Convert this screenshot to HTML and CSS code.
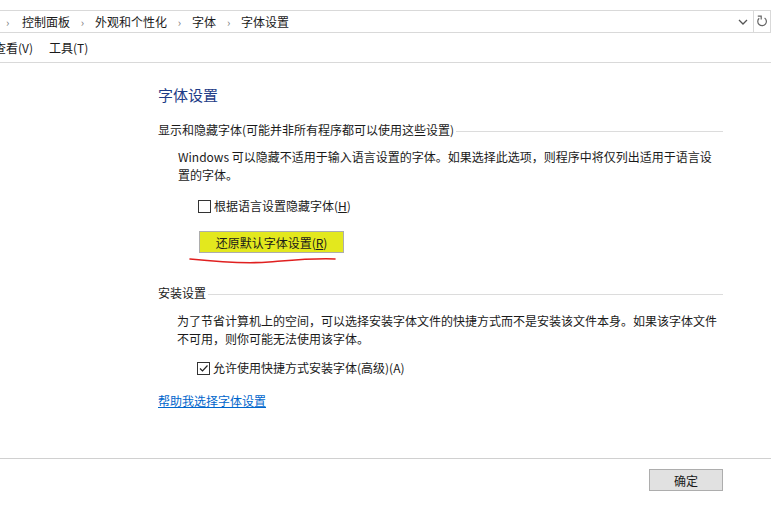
FILE: index.html
```html
<!DOCTYPE html>
<html lang="zh-CN">
<head>
    <meta charset="UTF-8">
    <title>字体设置</title>
    <link rel="stylesheet" href="styles.css">
</head>
<body>
    <div class="addr-bar">
        <div class="crumbs">
            <span class="sep">›</span>
            <span>控制面板</span>
            <span class="sep">›</span>
            <span>外观和个性化</span>
            <span class="sep">›</span>
            <span>字体</span>
            <span class="sep">›</span>
            <span>字体设置</span>
        </div>
        <div class="addr-tools">
            <svg class="drop" width="10" height="6" viewBox="0 0 10 6"><path d="M1 1 L5 5 L9 1" fill="none" stroke="#555" stroke-width="1.3"/></svg>
            <div class="refresh">
                <svg width="12" height="13" viewBox="0 0 12 13"><path d="M3.2 3.2 A4.3 4.3 0 1 0 8.6 2.9" fill="none" stroke="#666" stroke-width="1.2"/><path d="M1.8 1.2 L5.2 1.2 L5.2 4.6" fill="none" stroke="#666" stroke-width="1.2"/></svg>
            </div>
        </div>
    </div>

    <div class="menu-bar">
        <span class="menu-item cut">查看(V)</span>
        <span class="menu-item">工具(T)</span>
    </div>

    <div class="main">
        <h1 class="page-title">字体设置</h1>

        <div class="group-head"><span>显示和隐藏字体(可能并非所有程序都可以使用这些设置)</span><i></i></div>
        <p class="desc">Windows 可以隐藏不适用于输入语言设置的字体。如果选择此选项，则程序中将仅列出适用于语言设置的字体。</p>
        <label class="check-row"><span class="box"></span>根据语言设置隐藏字体(<u>H</u>)</label>
        <div class="btn-wrap">
            <button class="btn btn-marked">还原默认字体设置(<u>R</u>)</button>
            <svg class="scribble" width="150" height="10" viewBox="0 0 150 10"><path d="M1 4 C30 7 55 9 80 7 C105 5 125 3 146 4" fill="none" stroke="#e02020" stroke-width="1.6" stroke-linecap="round"/></svg>
        </div>

        <div class="group-head second"><span>安装设置</span><i></i></div>
        <p class="desc desc2">为了节省计算机上的空间，可以选择安装字体文件的快捷方式而不是安装该文件本身。如果该字体文件不可用，则你可能无法使用该字体。</p>
        <label class="check-row check2"><span class="box checked"><svg width="11" height="11" viewBox="0 0 11 11"><path d="M2 5.5 L4.5 8 L9.5 2.5" fill="none" stroke="#222" stroke-width="1.2"/></svg></span>允许使用快捷方式安装字体(高级)(A)</label>

        <a class="help-link" href="#">帮助我选择字体设置</a>
    </div>

    <div class="footer">
        <button class="btn btn-ok">确定</button>
    </div>
</body>
</html>
```

FILE: styles.css
```css
* {
    margin: 0;
    padding: 0;
    box-sizing: border-box;
}

body {
    font-family: "Noto Sans CJK SC", "Noto Sans", sans-serif;
    font-size: 12px;
    color: #1a1a1a;
    background: #fff;
    width: 771px;
    height: 508px;
    overflow: hidden;
    display: flex;
    flex-direction: column;
}

/* barre d'adresse */
.addr-bar {
    margin-top: 10px;
    height: 23px;
    border-top: 1px solid #d9d9d9;
    border-bottom: 1px solid #d9d9d9;
    display: flex;
    align-items: center;
    justify-content: space-between;
}

.crumbs {
    display: flex;
    align-items: center;
    line-height: 20px;
}

.crumbs .sep {
    width: 25px;
    text-align: center;
    color: #777;
    font-size: 11px;
}

.crumbs .sep:first-child {
    width: 22px;
    text-align: left;
    padding-left: 6px;
}

.addr-tools {
    display: flex;
    align-items: center;
    height: 100%;
}

.drop {
    margin-right: 5px;
}

.refresh {
    height: 100%;
    width: 18px;
    border-left: 1px solid #d9d9d9;
    border-right: 1px solid #d9d9d9;
    display: flex;
    align-items: center;
    justify-content: center;
}

/* menu */
.menu-bar {
    height: 30px;
    border-bottom: 1px solid #d9d9d9;
    display: flex;
    align-items: center;
}

.menu-item {
    margin-right: 16px;
}

.menu-item.cut {
    margin-left: -6px;
}

/* contenu */
.main {
    flex: 1;
    padding: 0 48px 0 158px;
}

.page-title {
    margin-top: 22px;
    font-size: 15px;
    font-weight: normal;
    line-height: 20px;
    color: #1e3c87;
}

.group-head {
    margin-top: 16px;
    display: flex;
    align-items: center;
    line-height: 18px;
}

.group-head i {
    flex: 1;
    margin-left: 2px;
    margin-top: 3px;
    border-top: 1px solid #dcdcdc;
}

.group-head.second {
    margin-top: 31px;
}

.desc {
    margin-top: 9px;
    padding-left: 20px;
    line-height: 18px;
}

.desc2 {
    margin-top: 10px;
    padding-left: 19px;
}

.check-row {
    margin-top: 13px;
    padding-left: 40px;
    display: flex;
    align-items: center;
    line-height: 18px;
}

.check2 {
    margin-top: 11px;
    padding-left: 39px;
}

.box {
    width: 13px;
    height: 13px;
    border: 1px solid #333;
    background: #fff;
    margin-right: 3px;
    display: flex;
    align-items: center;
    justify-content: center;
}

.btn-wrap {
    position: relative;
    margin-top: 16px;
    padding-left: 41px;
    height: 22px;
}

.btn {
    font-family: inherit;
    font-size: 12px;
    color: #1a1a1a;
    height: 22px;
    border: 1px solid #adadad;
    background: #e1e1e1;
}

.btn-marked {
    width: 145px;
    background: #e3e81e;
}

.scribble {
    position: absolute;
    left: 31px;
    top: 24px;
}

.help-link {
    display: inline-block;
    margin-top: 15px;
    line-height: 18px;
    color: #0066cc;
}

/* pied */
.footer {
    height: 50px;
    border-top: 1px solid #d0d0d0;
    display: flex;
    justify-content: flex-end;
    padding: 10px 48px 0 0;
}

.btn-ok {
    width: 74px;
}
```
